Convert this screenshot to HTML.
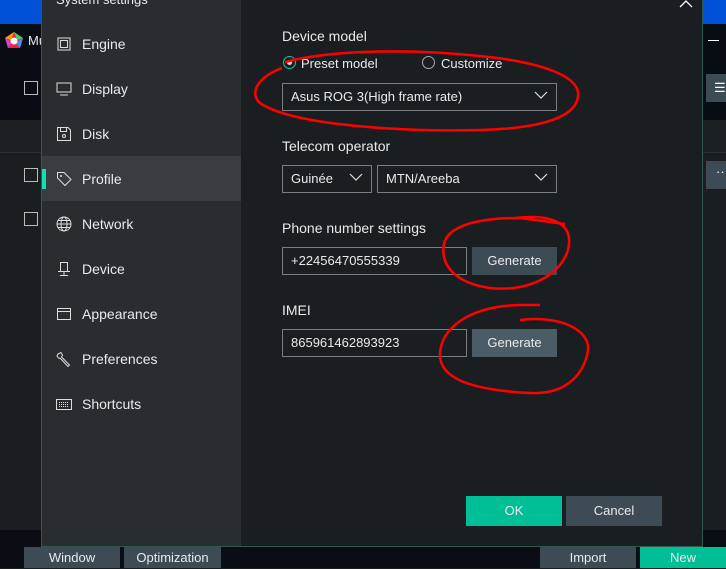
<!DOCTYPE html>
<html><head><style>
*{margin:0;padding:0;box-sizing:border-box}
body{width:726px;height:568px;overflow:hidden;background:#1b1e20;font-family:"Liberation Sans",sans-serif;color:#e8eaec;position:relative}
.a{position:absolute}
.t{font-size:14px;white-space:nowrap}
.nav{position:absolute;left:42px;width:199px;height:45px;font-size:14px;line-height:45px;padding-left:40px}
.nav svg{position:absolute;left:14px;top:14px}
.box{position:absolute;border:1px solid #7a7d80;font-size:13px;line-height:25px;padding-left:8px}
.btn{position:absolute;background:#3d4b55;font-size:13px;text-align:center;line-height:27px}
.chev{position:absolute;right:8px;top:7px}
.cb{position:absolute;left:24px;width:14px;height:14px;border:1px solid #bbb}
</style></head><body>
<!-- outer app left -->
<div class="a" style="left:0;top:0;width:41px;height:24px;background:#0050d8"></div>
<div class="a" style="left:0;top:24px;width:41px;height:96px;background:#080c13"></div>
<div class="a" style="left:0;top:120px;width:41px;height:32px;background:#1c1f21"></div>
<div class="a" style="left:0;top:152px;width:41px;height:1px;background:#2c2f31"></div>
<div class="a" style="left:0;top:530px;width:726px;height:38px;background:#0a0d13"></div>
<svg class="a" style="left:4px;top:31px" width="20" height="18" viewBox="0 0 20 18"><polygon points="10,1 19,7 16,17 4,17 1,7" fill="#e24"/><polygon points="10,1 19,7 13,9" fill="#4c6"/><polygon points="19,7 16,17 12,12" fill="#39f"/><polygon points="1,7 10,1 7,9" fill="#f90"/><polygon points="4,17 1,7 8,11" fill="#c4c"/><circle cx="10" cy="10" r="3.5" fill="#fff"/></svg>
<div class="a t" style="left:28px;top:33px;font-size:13px">Mu</div>
<div class="cb" style="top:81px"></div><div class="cb" style="top:168px"></div><div class="cb" style="top:212px"></div>
<!-- right strip -->
<div class="a" style="left:703px;top:0;width:23px;height:24px;background:#0050d8"></div>
<div class="a" style="left:703px;top:24px;width:23px;height:96px;background:#080c13"></div>
<div class="a" style="left:703px;top:120px;width:23px;height:32px;background:#1c1f21"></div>
<div class="a" style="left:703px;top:152px;width:23px;height:1px;background:#2c2f31"></div>
<div class="a" style="left:708px;top:40px;width:11px;height:1px;background:#fff"></div>
<div class="a" style="left:706px;top:74px;width:20px;height:28px;background:#3d4b55;color:#fff;font-size:13px;line-height:28px;padding-left:8px">☰</div>
<div class="a" style="left:706px;top:161px;width:20px;height:28px;background:#3d4b55;color:#fff;font-size:13px;line-height:22px;padding-left:10px">···</div>
<!-- bottom buttons -->
<div class="btn" style="left:24px;top:547px;width:96px;height:21px;line-height:22px">Window</div>
<div class="btn" style="left:124px;top:547px;width:97px;height:21px;line-height:22px">Optimization</div>
<div class="btn" style="left:540px;top:547px;width:96px;height:21px;line-height:22px">Import</div>
<div class="btn" style="left:640px;top:547px;width:86px;height:21px;line-height:22px;background:#00bf96">New</div>
<!-- dialog -->
<div class="a" style="left:41px;top:-1px;width:662px;height:548px;border:1px solid #2e5a50;background:#1b1e20"></div>
<div class="a" style="left:42px;top:0;width:199px;height:546px;background:#292d30"></div>
<div class="a t" style="left:56px;top:-8px;font-size:13px">System settings</div>
<svg class="a" style="left:679px;top:0" width="14" height="8"><path d="M1 7L7 1L13 7" stroke="#fff" stroke-width="1.3" fill="none"/></svg>
<div class="a" style="left:42px;top:156px;width:199px;height:45px;background:#393d40"></div>
<div class="a" style="left:42px;top:169px;width:4px;height:20px;background:#10e0b0"></div>
<div class="nav" style="top:22px"><svg width="16" height="16"><rect x="2" y="2" width="12" height="12" fill="none" stroke="#ddd"/><rect x="4.5" y="4.5" width="7" height="7" fill="none" stroke="#ddd"/></svg>Engine</div>
<div class="nav" style="top:67px"><svg width="16" height="16"><rect x="1" y="2" width="14" height="9" fill="none" stroke="#ddd"/><path d="M4 14H12" stroke="#ddd"/></svg>Display</div>
<div class="nav" style="top:112px"><svg width="16" height="16"><path d="M1.5 1.5H12L14.5 4V14.5H1.5Z" fill="none" stroke="#ddd"/><rect x="4.5" y="1.5" width="6" height="4" fill="none" stroke="#ddd"/><circle cx="8" cy="10" r="1.5" fill="none" stroke="#ddd"/></svg>Disk</div>
<div class="nav" style="top:157px"><svg width="16" height="16"><path d="M1.5 1.5H8L15 8.5L9 14.5L1.5 7Z" fill="none" stroke="#ddd"/><circle cx="5" cy="5" r="1" fill="#ddd"/></svg>Profile</div>
<div class="nav" style="top:202px"><svg width="16" height="16"><circle cx="8" cy="8" r="7" fill="none" stroke="#ddd"/><ellipse cx="8" cy="8" rx="3" ry="7" fill="none" stroke="#ddd"/><path d="M1 8H15M2.5 4.5H13.5M2.5 11.5H13.5" stroke="#ddd"/></svg>Network</div>
<div class="nav" style="top:247px"><svg width="16" height="16"><rect x="4.5" y="1.5" width="7" height="9" fill="none" stroke="#ddd"/><path d="M2 10.5H14M8 11V14M4 14.5H12" stroke="#ddd"/></svg>Device</div>
<div class="nav" style="top:292px"><svg width="16" height="16"><rect x="1.5" y="2.5" width="13" height="11" fill="none" stroke="#ddd"/><path d="M1.5 5.5H14.5" stroke="#ddd"/></svg>Appearance</div>
<div class="nav" style="top:337px"><svg width="16" height="16"><path d="M2 3L5 1.5L6.5 4L5.5 6L13.5 14L12 15.5L4.5 7.5L2.5 7L1 5Z" fill="none" stroke="#ddd"/></svg>Preferences</div>
<div class="nav" style="top:382px"><svg width="16" height="16"><rect x="0.5" y="3.5" width="15" height="10" fill="none" stroke="#ddd"/><path d="M3 6.5H13M3 8.5H13M3 10.5H13" stroke="#ddd" stroke-dasharray="1 1"/></svg>Shortcuts</div>
<!-- content -->
<div class="a t" style="left:282px;top:28px">Device model</div>
<div class="a" style="left:283px;top:56px;width:13px;height:13px;border:1px solid #10c9a0;border-radius:50%"></div>
<div class="a" style="left:287px;top:60px;width:5px;height:5px;background:#ddd;border-radius:50%"></div>
<div class="a t" style="left:301px;top:56px;font-size:13px">Preset model</div>
<div class="a" style="left:422px;top:56px;width:13px;height:13px;border:1px solid #aaa;border-radius:50%"></div>
<div class="a t" style="left:441px;top:56px;font-size:13px">Customize</div>
<div class="box" style="left:282px;top:83px;width:275px;height:28px">Asus ROG 3(High frame rate)<svg class="chev" width="14" height="9"><path d="M1 1L7 7L13 1" stroke="#ddd" fill="none" stroke-width="1.2"/></svg></div>
<div class="a t" style="left:282px;top:138px">Telecom operator</div>
<div class="box" style="left:282px;top:165px;width:90px;height:28px">Guinée<svg class="chev" width="14" height="9"><path d="M1 1L7 7L13 1" stroke="#ddd" fill="none" stroke-width="1.2"/></svg></div>
<div class="box" style="left:377px;top:165px;width:180px;height:28px">MTN/Areeba<svg class="chev" width="14" height="9"><path d="M1 1L7 7L13 1" stroke="#ddd" fill="none" stroke-width="1.2"/></svg></div>
<div class="a t" style="left:282px;top:220px">Phone number settings</div>
<div class="box" style="left:282px;top:247px;width:185px;height:28px">+22456470555339</div>
<div class="btn" style="left:472px;top:247px;width:85px;height:28px">Generate</div>
<div class="a t" style="left:282px;top:302px">IMEI</div>
<div class="box" style="left:282px;top:329px;width:185px;height:28px">865961462893923</div>
<div class="btn" style="left:472px;top:329px;width:85px;height:28px;background:#4a5c66">Generate</div>
<div class="btn" style="left:466px;top:496px;width:96px;height:30px;line-height:30px;background:#00bf96">OK</div>
<div class="btn" style="left:566px;top:496px;width:96px;height:30px;line-height:30px">Cancel</div>
<!-- red marks -->
<svg class="a" style="left:0;top:0" width="726" height="568"><g fill="none" stroke="#f00" stroke-width="2.5">
<path d="M282 68C250 80 250 100 265 106C300 125 400 132 480 130C560 128 580 110 578 92C575 75 540 62 480 56C420 50 340 48 285 62"/>
<path d="M515 218C550 214 575 222 568 250C560 275 530 292 490 288C455 283 440 265 444 244C448 225 480 218 520 218L565 224"/>
<path d="M520 320C560 315 590 330 588 350C585 370 570 395 530 393C470 390 440 378 440 355C440 328 470 306 520 305L540 305"/>
</g></svg>
</body></html>
